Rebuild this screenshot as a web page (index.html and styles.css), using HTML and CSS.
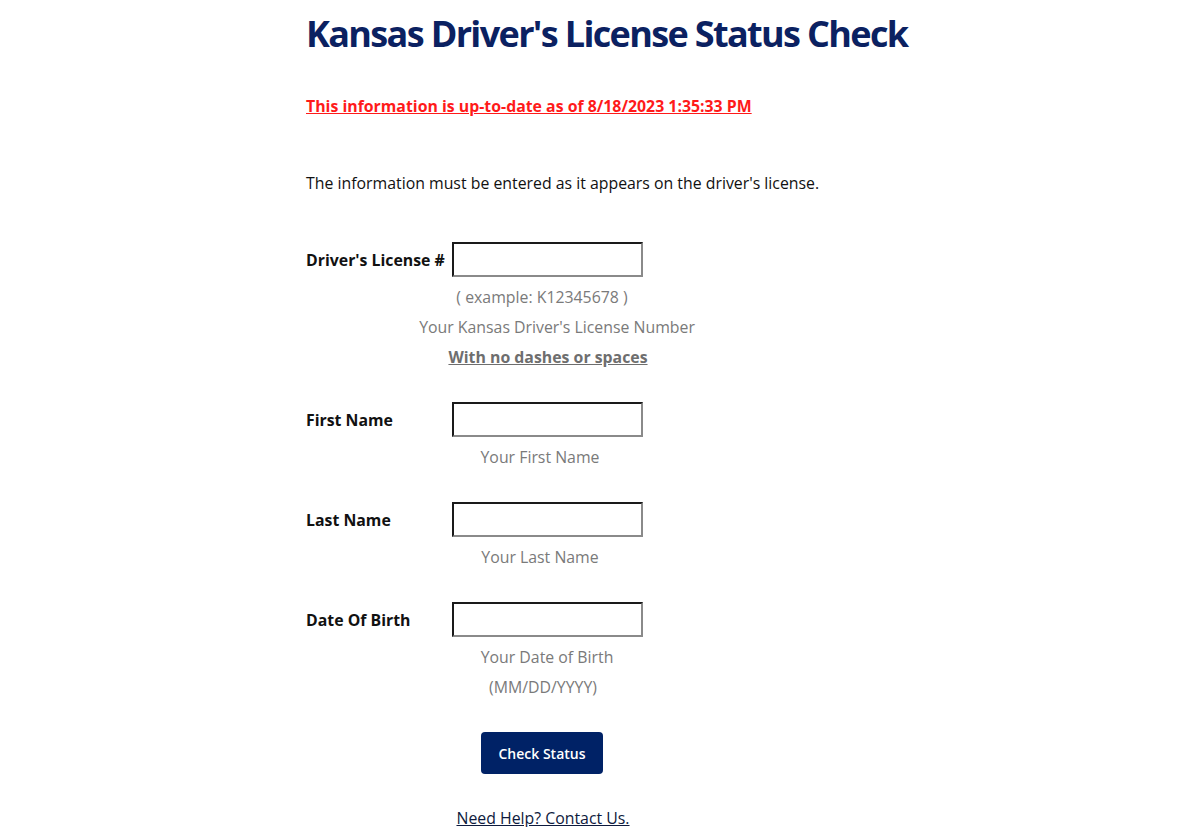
FILE: index.html
```html
<!DOCTYPE html>
<html lang="en">
<head>
<meta charset="utf-8">
<title>Kansas Driver's License Status Check</title>
<link rel="stylesheet" href="styles.css">
</head>
<body>
<main class="page">
  <h1 class="title">Kansas Driver's License Status Check</h1>
  <p class="updated">This information is up-to-date as of 8/18/2023 1:35:33 PM</p>
  <p class="intro">The information must be entered as it appears on the driver's license.</p>

  <form class="form">
    <div class="field field-first">
      <label class="label" for="dl">Driver's License #</label>
      <input class="input" id="dl" type="text">
    </div>
    <div class="help">
      <div class="help-line">( example: K12345678 )</div>
      <div class="help-line shift-kansas">Your Kansas Driver's License Number</div>
      <div class="help-line strong shift-dash">With no dashes or spaces</div>
    </div>

    <div class="field">
      <label class="label" for="fn">First Name</label>
      <input class="input" id="fn" type="text">
    </div>
    <div class="help">
      <div class="help-line shift-name">Your First Name</div>
    </div>

    <div class="field">
      <label class="label" for="ln">Last Name</label>
      <input class="input" id="ln" type="text">
    </div>
    <div class="help">
      <div class="help-line shift-name">Your Last Name</div>
    </div>

    <div class="field">
      <label class="label" for="dob">Date Of Birth</label>
      <input class="input" id="dob" type="text">
    </div>
    <div class="help">
      <div class="help-line shift-dob">Your Date of Birth</div>
      <div class="help-line shift-mm">(MM/DD/YYYY)</div>
    </div>

    <div class="actions">
      <button class="btn" type="button">Check Status</button>
    </div>
    <div class="help-link">
      <a href="#" class="contact">Need Help? Contact Us.</a>
    </div>
  </form>
</main>
</body>
</html>
```
FILE: styles.css
```css
html, body {
  margin: 0;
  padding: 0;
  background: #ffffff;
}
body {
  font-family: "Open Sans", "Noto Sans", sans-serif;
  color: #111;
}
.page {
  width: 620px;
  margin-left: 306px;
}
.title {
  margin: 0;
  padding-top: 10px;
  font-size: 36px;
  font-weight: 700;
  letter-spacing: -1.65px;
  line-height: 48px;
  color: #0b2161;
}
.updated {
  margin: 38px 0 0;
  font-size: 15.85px;
  font-weight: 700;
  line-height: 20px;
  color: #ff1a1a;
  text-decoration: underline;
}
.intro {
  margin: 56px 0 0;
  font-size: 15.85px;
  line-height: 22px;
  color: #111;
}
.form {
  margin-top: 48px;
  width: 472px;
}
.field {
  display: flex;
  align-items: center;
  margin-top: 30px;
}
.field-first {
  margin-top: 0;
}
.label {
  width: 146px;
  font-size: 15.85px;
  font-weight: 700;
  color: #111;
}
.input {
  box-sizing: border-box;
  width: 191px;
  height: 35px;
  margin: 0;
  padding: 2px 4px;
  border-style: solid;
  border-width: 2px;
  border-color: #1a1a1a #8a8a8a #8a8a8a #1a1a1a;
  background: #fff;
  font: inherit;
}
.help {
  margin-top: 5px;
  text-align: center;
}
.help-line {
  font-size: 15.85px;
  line-height: 30px;
  color: #7a7a7a;
}
.strong {
  font-weight: 700;
  text-decoration: underline;
  color: #6e6e6e;
}
.shift-kansas { padding-left: 30px; }
.shift-dash { padding-left: 12px; }
.shift-dob { padding-left: 10px; }
.shift-mm { padding-left: 2px; }
.shift-name { padding-right: 4px; }
.actions {
  margin-top: 30px;
  text-align: center;
}
.btn {
  width: 122px;
  height: 42px;
  border: none;
  border-radius: 4px;
  background: #002266;
  color: #fff;
  font-family: "Open Sans", "Noto Sans", sans-serif;
  font-size: 14px;
  font-weight: 600;
  cursor: pointer;
}
.help-link {
  margin-top: 33px;
  text-align: center;
  padding-left: 2px;
  line-height: 22px;
}
.contact {
  font-size: 15.85px;
  color: #0e1a3d;
  text-decoration: underline;
}
```
